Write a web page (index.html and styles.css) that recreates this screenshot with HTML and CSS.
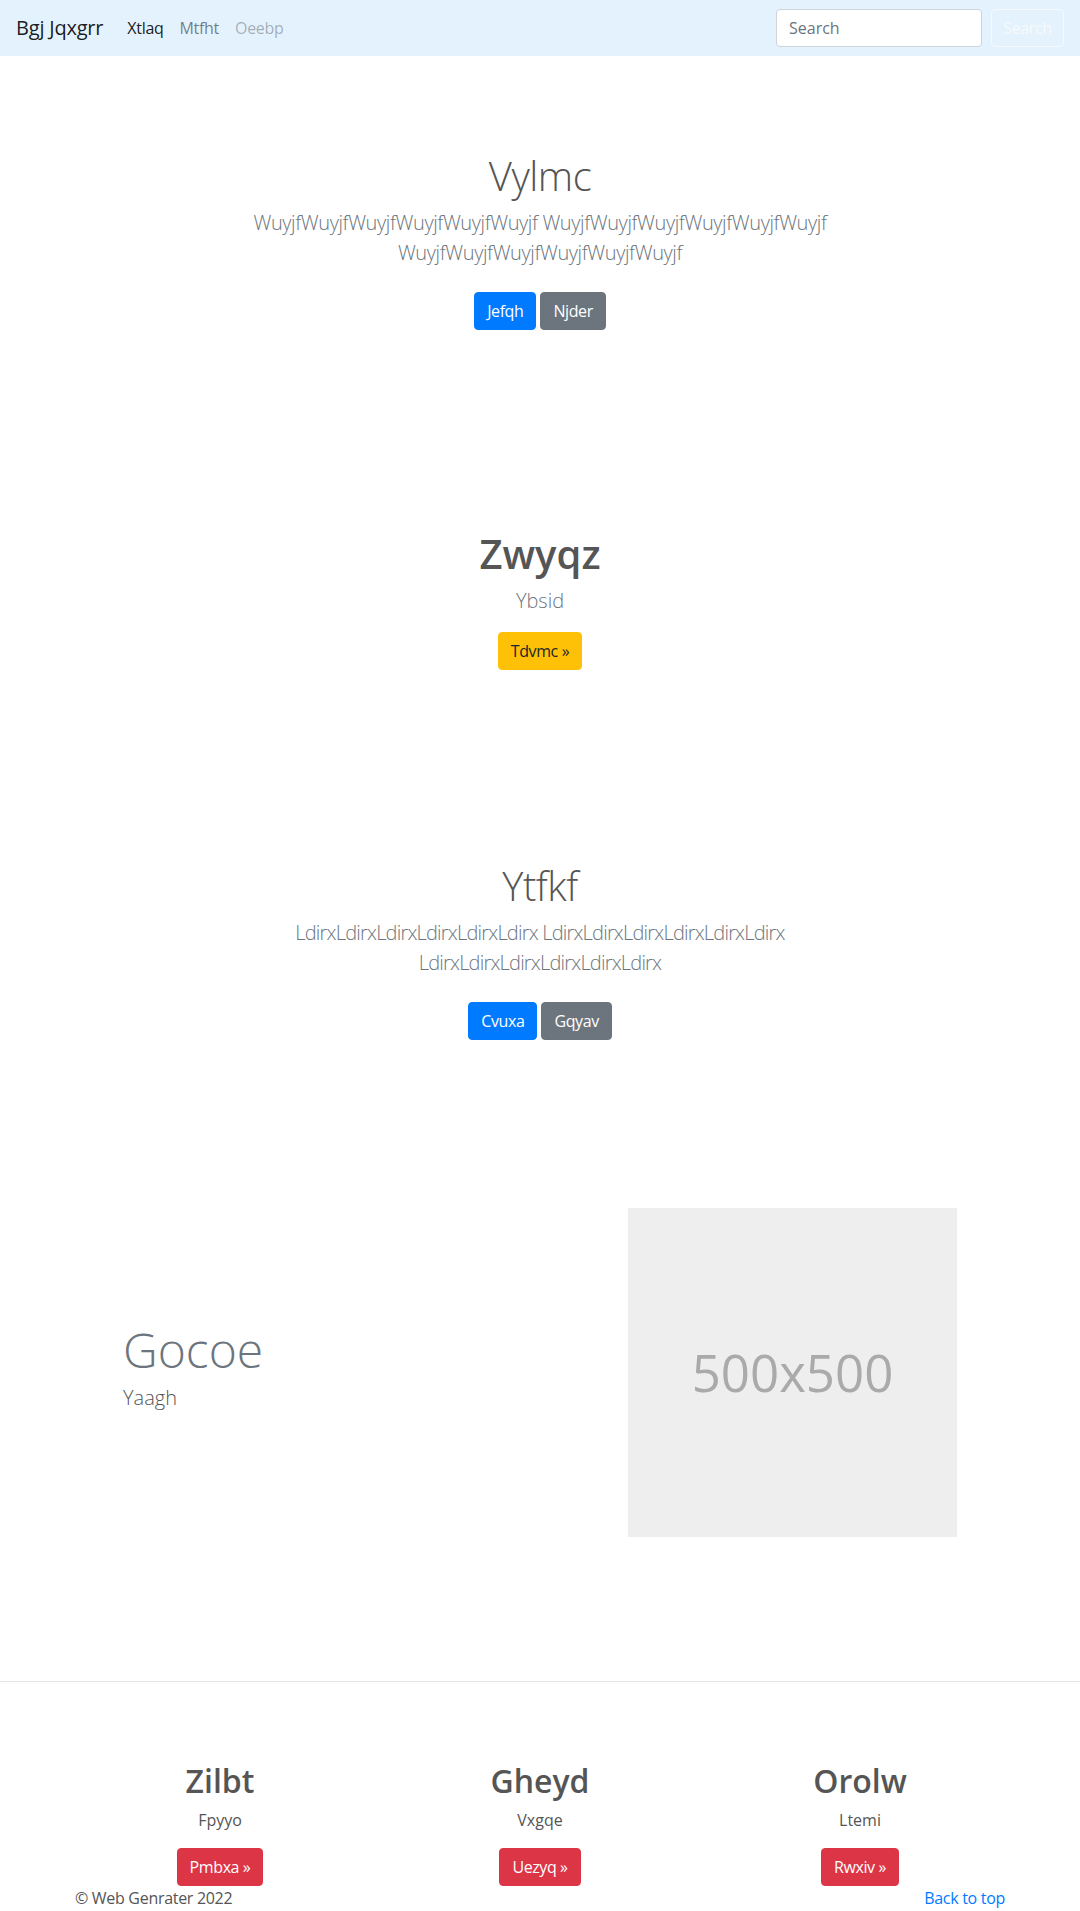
FILE: index.html
```html
<!DOCTYPE html>
<html lang="en">
<head>
<meta charset="utf-8">
<title>Bgj Jqxgrr</title>
<link rel="stylesheet" href="styles.css">
</head>
<body>
<nav class="navbar">
  <div class="nav-left">
    <a class="brand" href="#">Bgj Jqxgrr</a>
    <ul class="nav-links">
      <li><a class="nav-link active" href="#">Xtlaq</a></li>
      <li><a class="nav-link" href="#">Mtfht</a></li>
      <li><a class="nav-link disabled" href="#">Oeebp</a></li>
    </ul>
  </div>
  <form class="search-form">
    <input class="search-input" type="search" placeholder="Search">
    <button class="btn btn-outline-light" type="button">Search</button>
  </form>
</nav>

<section class="hero">
  <div class="hero-container">
    <h1 class="hero-heading light">Vylmc</h1>
    <p class="lead muted tight">WuyjfWuyjfWuyjfWuyjfWuyjfWuyjf WuyjfWuyjfWuyjfWuyjfWuyjfWuyjf WuyjfWuyjfWuyjfWuyjfWuyjfWuyjf</p>
    <div class="actions spaced">
      <a class="btn btn-primary" href="#">Jefqh</a>
      <a class="btn btn-secondary" href="#">Njder</a>
    </div>
  </div>
</section>

<section class="hero">
  <div class="hero-container">
    <h1 class="hero-heading bold">Zwyqz</h1>
    <p class="lead muted">Ybsid</p>
    <div class="actions">
      <a class="btn btn-warning" href="#">Tdvmc &raquo;</a>
    </div>
  </div>
</section>

<section class="hero">
  <div class="hero-container">
    <h1 class="hero-heading light">Ytfkf</h1>
    <p class="lead muted tighter">LdirxLdirxLdirxLdirxLdirxLdirx LdirxLdirxLdirxLdirxLdirxLdirx LdirxLdirxLdirxLdirxLdirxLdirx</p>
    <div class="actions spaced">
      <a class="btn btn-primary" href="#">Cvuxa</a>
      <a class="btn btn-secondary" href="#">Gqyav</a>
    </div>
  </div>
</section>

<section class="feature">
  <div class="feature-text">
    <h2 class="feature-heading">Gocoe</h2>
    <p class="lead">Yaagh</p>
  </div>
  <div class="placeholder">500x500</div>
</section>

<hr class="divider">

<section class="columns">
  <div class="col">
    <h2 class="col-heading">Zilbt</h2>
    <p class="col-text">Fpyyo</p>
    <div class="actions">
      <a class="btn btn-danger" href="#">Pmbxa &raquo;</a>
    </div>
  </div>
  <div class="col">
    <h2 class="col-heading">Gheyd</h2>
    <p class="col-text">Vxgqe</p>
    <div class="actions">
      <a class="btn btn-danger" href="#">Uezyq &raquo;</a>
    </div>
  </div>
  <div class="col">
    <h2 class="col-heading">Orolw</h2>
    <p class="col-text">Ltemi</p>
    <div class="actions">
      <a class="btn btn-danger" href="#">Rwxiv &raquo;</a>
    </div>
  </div>
</section>

<footer class="footer">
  <p class="copyright">&copy; Web Genrater 2022</p>
  <p class="back-top"><a href="#">Back to top</a></p>
</footer>
</body>
</html>
```

FILE: styles.css
```css
* { box-sizing: border-box; }

html, body {
  margin: 0;
  padding: 0;
}

body {
  font-family: "Open Sans", "Noto Sans", "Liberation Sans", sans-serif;
  font-size: 16px;
  line-height: 1.5;
  color: #555;
  background: #fff;
}

a { text-decoration: none; }

/* Navbar */
.navbar {
  display: flex;
  align-items: center;
  justify-content: space-between;
  padding: 8px 16px;
  background: #e3f2fd;
  height: 56px;
}

.nav-left {
  display: flex;
  align-items: center;
}

.brand {
  font-size: 20px;
  line-height: 30px;
  padding: 5px 0;
  margin-right: 16px;
  color: rgba(0, 0, 0, 0.9);
  letter-spacing: -0.2px;
}

.nav-links {
  display: flex;
  list-style: none;
  margin: 0;
  padding: 0;
}

.nav-link {
  display: block;
  padding: 8px;
  line-height: 24px;
  color: rgba(0, 0, 0, 0.5);
  letter-spacing: -0.3px;
}

.nav-link.active { color: rgba(0, 0, 0, 0.9); }
.nav-link.disabled { color: rgba(0, 0, 0, 0.3); }

.search-form {
  display: flex;
  align-items: center;
}

.search-input {
  width: 206px;
  height: 38px;
  margin-right: 9px;
  padding: 6px 12px;
  font-family: inherit;
  font-size: 16px;
  line-height: 24px;
  color: #495057;
  background: #fff;
  border: 1px solid #ced4da;
  border-radius: 4px;
}

.search-input::placeholder { color: #6c757d; }

/* Buttons */
.btn {
  display: inline-block;
  padding: 6px 12px;
  font-family: inherit;
  font-size: 16px;
  line-height: 24px;
  font-weight: 400;
  letter-spacing: -0.4px;
  border: 1px solid transparent;
  border-radius: 4px;
  text-align: center;
  background: transparent;
}

.btn-outline-light {
  width: 73px;
  padding: 6px 0;
  color: #f8f9fa;
  border-color: #f8f9fa;
}

.btn-primary { color: #fff; background: #007bff; border-color: #007bff; }
.btn-secondary { color: #fff; background: #6c757d; border-color: #6c757d; }
.btn-warning { color: #212529; background: #ffc107; border-color: #ffc107; }
.btn-danger { color: #fff; background: #dc3545; border-color: #dc3545; }

/* Hero sections */
.hero {
  padding: 96px 0;
  text-align: center;
}

.hero-container {
  max-width: 640px;
  margin: 0 auto;
  padding: 0 15px;
}

.hero-heading {
  margin: 0 0 8px;
  font-size: 40px;
  line-height: 48px;
}

.hero-heading.light { font-weight: 300; letter-spacing: -0.5px; }
.hero-heading.bold { font-weight: 600; }

.lead {
  margin: 0 0 16px;
  font-size: 20px;
  line-height: 30px;
  font-weight: 300;
}

.lead.tight { letter-spacing: -0.4px; }
.lead.tighter { letter-spacing: -0.8px; }

.muted { color: #6c757d; }

.actions {
  display: flex;
  justify-content: center;
  gap: 4px;
}

.actions.spaced .btn { margin: 8px 0; }

/* Feature */
.feature {
  display: flex;
  align-items: center;
  justify-content: space-between;
  max-width: 834px;
  margin: 0 auto;
  padding: 64px 0 128px;
}

.feature-heading {
  margin: 0;
  font-size: 48px;
  line-height: 67px;
  font-weight: 300;
  color: #6c757d;
}

.feature-text .lead { margin-bottom: 16px; }

.placeholder {
  width: 329px;
  height: 329px;
  display: flex;
  align-items: center;
  justify-content: center;
  background: #eee;
  color: #aaa;
  font-size: 51px;
}

/* Divider */
.divider {
  margin: 16px 0;
  border: 0;
  border-top: 1px solid rgba(0, 0, 0, 0.1);
  height: 0;
}

/* Columns */
.columns {
  display: grid;
  grid-template-columns: repeat(3, 1fr);
  max-width: 960px;
  margin: 0 auto;
  padding-top: 64px;
  text-align: center;
}

.col { padding: 0 15px; }

.col-heading {
  margin: 0 0 8px;
  font-size: 32px;
  line-height: 38.4px;
  font-weight: 600;
}

.col-text {
  margin: 0 0 16px;
}

/* Footer */
.footer {
  display: flex;
  justify-content: space-between;
  max-width: 960px;
  margin: 0 auto;
  padding: 0 15px;
}

.footer p { margin: 0 0 16px; }

.copyright { letter-spacing: -0.3px; }

.back-top a { color: #007bff; letter-spacing: -0.3px; }
```
